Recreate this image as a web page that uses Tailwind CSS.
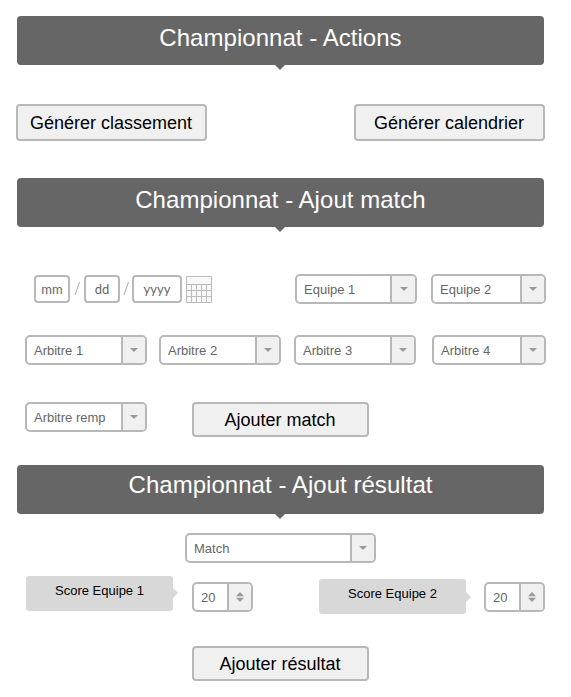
<!DOCTYPE html>
<html lang="fr">
<head>
<meta charset="utf-8">
<title>Championnat</title>
<script src="https://cdn.jsdelivr.net/npm/@tailwindcss/browser@4"></script>
</head>
<body class="w-[571px] h-[697px] overflow-hidden bg-white font-['Liberation_Sans',Arial,sans-serif] text-[13px] text-[#666]">
<main class="flex flex-col pt-4 pl-4 w-[546px]">
  <h2 class="relative ml-px w-[527px] h-[49px] rounded bg-[#666] text-white text-2xl tracking-[0.04px] leading-[44px] text-center whitespace-nowrap"><span>Championnat - Actions</span>
    <svg class="absolute left-[258px] top-[49px]" width="10" height="5"><path d="M0 0H10L5 5Z" fill="#666"/></svg></h2>

  <div class="flex justify-between mt-[39px] w-[529px]">
    <button class="w-[191px] h-[37px] border-2 border-[#b8b8b8] rounded bg-[#f0f0f0] pt-px pr-px text-lg leading-[33px] text-black whitespace-nowrap"><span>Générer classement</span></button>
    <button class="w-[191px] h-[37px] border-2 border-[#b8b8b8] rounded bg-[#f0f0f0] pt-px pr-px text-lg leading-[33px] text-black whitespace-nowrap"><span>Générer calendrier</span></button>
  </div>

  <h2 class="relative ml-px mt-[37px] w-[527px] h-[49px] rounded bg-[#666] text-white text-2xl tracking-[0.04px] leading-[44px] text-center whitespace-nowrap"><span>Championnat - Ajout match</span>
    <svg class="absolute left-[258px] top-[49px]" width="10" height="5"><path d="M0 0H10L5 5Z" fill="#666"/></svg></h2>

  <div class="flex mt-[47px] h-[30px]">
    <div class="flex items-center ml-[18px] mr-[83px] w-[178px] h-[30px] font-[Lato,sans-serif]">
      <span class="w-9 h-7 border-2 border-[#b8b8b8] rounded leading-[24px] text-center">mm</span>
      <svg class="w-[14px] h-[30px]" viewBox="0 0 14 30"><path d="M5 21L9.5 8" stroke="#aaa" fill="none"/></svg>
      <span class="w-9 h-7 border-2 border-[#b8b8b8] rounded leading-[24px] text-center">dd</span>
      <svg class="w-[12px] h-[30px]" viewBox="0 0 12 30"><path d="M4 21L8.5 8" stroke="#aaa" fill="none"/></svg>
      <span class="w-[50px] h-7 border-2 border-[#b8b8b8] rounded leading-[24px] text-center">yyyy</span>
      <svg class="ml-1 shrink-0" width="26" height="27"><path fill="#f8f8f8" d="M.5 .5h25v26H.5z"/><path d="M.5 .5h25v26H.5zM.5 8.5h25M.5 14.5h25M.5 20.5h25M5.5 8v18M10.5 8v18M15.5 8v18M20.5 8v18" fill="none" stroke="#bbb"/></svg>
    </div>
    <div class="flex w-[122px] h-[30px] border-2 border-[#b8b8b8] rounded-[5px] overflow-hidden leading-[28px]"><span class="flex-1 pl-[7px] whitespace-nowrap">Equipe 1</span><span class="flex items-center justify-center w-[25px] border-l-2 border-[#b8b8b8] bg-[#f0f0f0]"><svg width="8" height="4"><path d="M0 0H8L4 4Z" fill="#999"/></svg></span></div>
    <div class="flex ml-[14px] w-[115px] h-[30px] border-2 border-[#b8b8b8] rounded-[5px] overflow-hidden leading-[28px]"><span class="flex-1 pl-[7px] whitespace-nowrap">Equipe 2</span><span class="flex items-center justify-center w-6 border-l-2 border-[#b8b8b8] bg-[#f0f0f0]"><svg width="8" height="4"><path d="M0 0H8L4 4Z" fill="#999"/></svg></span></div>
  </div>

  <div class="flex mt-[31px] ml-[9px] h-[30px]">
    <div class="flex w-[122px] h-[30px] border-2 border-[#b8b8b8] rounded-[5px] overflow-hidden leading-[28px]"><span class="flex-1 pl-[7px] whitespace-nowrap">Arbitre 1</span><span class="flex items-center justify-center w-6 border-l-2 border-[#b8b8b8] bg-[#f0f0f0]"><svg width="8" height="4"><path d="M0 0H8L4 4Z" fill="#999"/></svg></span></div>
    <div class="flex ml-3 w-[122px] h-[30px] border-2 border-[#b8b8b8] rounded-[5px] overflow-hidden leading-[28px]"><span class="flex-1 pl-[7px] whitespace-nowrap">Arbitre 2</span><span class="flex items-center justify-center w-6 border-l-2 border-[#b8b8b8] bg-[#f0f0f0]"><svg width="8" height="4"><path d="M0 0H8L4 4Z" fill="#999"/></svg></span></div>
    <div class="flex ml-[13px] w-[122px] h-[30px] border-2 border-[#b8b8b8] rounded-[5px] overflow-hidden leading-[28px]"><span class="flex-1 pl-[7px] whitespace-nowrap">Arbitre 3</span><span class="flex items-center justify-center w-6 border-l-2 border-[#b8b8b8] bg-[#f0f0f0]"><svg width="8" height="4"><path d="M0 0H8L4 4Z" fill="#999"/></svg></span></div>
    <div class="flex ml-4 w-[114px] h-[30px] border-2 border-[#b8b8b8] rounded-[5px] overflow-hidden leading-[28px]"><span class="flex-1 pl-[7px] whitespace-nowrap">Arbitre 4</span><span class="flex items-center justify-center w-6 border-l-2 border-[#b8b8b8] bg-[#f0f0f0]"><svg width="8" height="4"><path d="M0 0H8L4 4Z" fill="#999"/></svg></span></div>
  </div>

  <div class="flex mt-[37px] ml-[9px] h-[35px]">
    <div class="flex w-[122px] h-[30px] border-2 border-[#b8b8b8] rounded-[5px] overflow-hidden leading-[28px]"><span class="flex-1 pl-[7px] whitespace-nowrap">Arbitre remp</span><span class="flex items-center justify-center w-6 border-l-2 border-[#b8b8b8] bg-[#f0f0f0]"><svg width="8" height="4"><path d="M0 0H8L4 4Z" fill="#999"/></svg></span></div>
    <button class="ml-[45px] w-[177px] h-[35px] border-2 border-[#b8b8b8] rounded bg-[#f0f0f0] pt-px pr-px text-lg leading-[31px] text-black whitespace-nowrap"><span>Ajouter match</span></button>
  </div>

  <h2 class="relative ml-px mt-7 w-[527px] h-[49px] rounded bg-[#666] text-white text-2xl tracking-[0.04px] leading-[40px] text-center whitespace-nowrap"><span>Championnat - Ajout résultat</span>
    <svg class="absolute left-[258px] top-[49px]" width="10" height="5"><path d="M0 0H10L5 5Z" fill="#666"/></svg></h2>

  <div class="flex mt-[19px] ml-[169px] w-[191px] h-[30px] border-2 border-[#b8b8b8] rounded-[5px] overflow-hidden leading-[28px]"><span class="flex-1 pl-[7px] whitespace-nowrap">Match</span><span class="flex items-center justify-center w-6 border-l-2 border-[#b8b8b8] bg-[#f0f0f0]"><svg width="8" height="4"><path d="M0 0H8L4 4Z" fill="#999"/></svg></span></div>

  <div class="flex mt-[13px] ml-[10px] h-[38px]">
    <div class="relative w-[147px] h-[35px] rounded-[3px] bg-[#d8d8d8] text-black text-center leading-[29px] whitespace-nowrap"><span>Score Equipe 1</span>
      <svg class="absolute left-[147px] top-3" width="5" height="10"><path d="M0 0L5 5L0 10Z" fill="#d8d8d8"/></svg></div>
    <div class="flex mt-[6px] ml-[19px] w-[61px] h-[30px] border-2 border-[#b8b8b8] rounded-[5px] overflow-hidden leading-[28px]"><span class="flex-1 pl-[7px]">20</span><span class="flex items-center justify-center pr-px w-6 border-l-2 border-[#b8b8b8] bg-[#f0f0f0]"><svg width="8" height="10"><path d="M0 4.3L4 0L8 4.3ZM0 5.7H8L4 10Z" fill="#999"/></svg></span></div>
    <div class="relative mt-[3px] ml-[66px] w-[147px] h-[35px] rounded-[3px] bg-[#d8d8d8] text-black text-center leading-[29px] whitespace-nowrap"><span>Score Equipe 2</span>
      <svg class="absolute left-[147px] top-[13px]" width="5" height="10"><path d="M0 0L5 5L0 10Z" fill="#d8d8d8"/></svg></div>
    <div class="flex mt-[6px] ml-[18px] w-[61px] h-[30px] border-2 border-[#b8b8b8] rounded-[5px] overflow-hidden leading-[28px]"><span class="flex-1 pl-[7px]">20</span><span class="flex items-center justify-center pr-px w-6 border-l-2 border-[#b8b8b8] bg-[#f0f0f0]"><svg width="8" height="10"><path d="M0 4.3L4 0L8 4.3ZM0 5.7H8L4 10Z" fill="#999"/></svg></span></div>
  </div>

  <button class="mt-8 ml-44 w-[177px] h-[35px] border-2 border-[#b8b8b8] rounded bg-[#f0f0f0] pt-px pr-px text-lg leading-[31px] text-black whitespace-nowrap"><span>Ajouter résultat</span></button>
</main>
</body>
</html>
